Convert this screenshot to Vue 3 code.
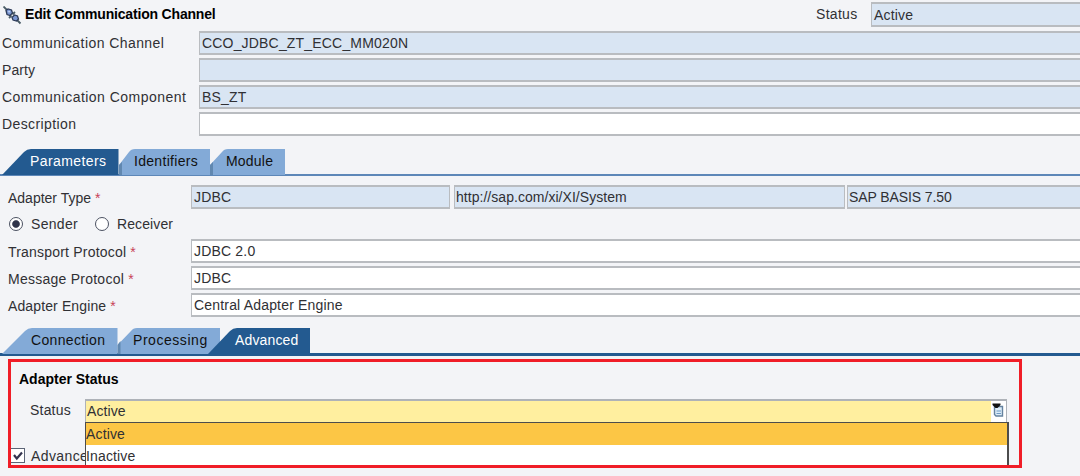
<template>
  <div class="screen">
    <div class="title-bar">
      <svg class="plug" width="19" height="19" viewBox="0 0 19 19">
        <path d="M0.500 0.500L4 4M14 14L17.500 17.500M12 6L9.500 8.500M8.500 9.500L6 12" stroke="#4a5c66" stroke-width="1.800" />
        <path d="M3 4.500L5 3L8.500 4L9.500 7L7 9.500L4 8.500Z" fill="#7c98d4" stroke="#2c3a58" stroke-width="1.300" />
        <path d="M9 11.500L11.500 9L14.500 10L15.500 13L13.500 15L10 14Z" fill="#7c98d4" stroke="#2c3a58" stroke-width="1.300" />
        <path d="M5 5H7.500L6 7Z" fill="#c1d2f4" />
      </svg>
      <h1>Edit Communication Channel</h1>
      <span class="status-label">Status</span>
      <div class="field top-status">Active</div>
    </div>

    <div class="header-form">
      <div v-for="row in header" :key="row.label" class="row">
        <label :class="row.cls">{{ row.label }}</label>
        <div class="field" :class="{ white: row.editable }">{{ row.value }}</div>
      </div>
    </div>

    <div class="tabs upper">
      <svg class="tab-shapes" width="320" height="26" viewBox="0 0 320 26">
        <path d="M119 26V16L129 3Q131 0 135 0H210V26Z" fill="#83aad7" />
        <path d="M210 26V16L222 3Q224 0 228 0H285V26Z" fill="#83aad7" />
        <path d="M119 16L122 13V26H119ZM210 16L213 13V26H210Z" fill="#6188b0" />
        <path d="M2 26L24 3Q27 0 31 0H118.500V26Z" fill="#235a90" />
      </svg>
      <span class="tab selected t-param">Parameters</span>
      <span class="tab t-ident">Identifiers</span>
      <span class="tab t-module">Module</span>
    </div>

    <div class="adapter">
      <div class="row">
        <label class="l-type">Adapter Type <b>*</b></label>
        <div class="field type">JDBC</div>
        <div class="field namespace">http://sap.com/xi/XI/System</div>
        <div class="field version">SAP BASIS 7.50</div>
      </div>
      <div class="radios">
        <i class="radio on"></i><span class="sender">Sender</span>
        <i class="radio"></i><span class="receiver">Receiver</span>
      </div>
      <div v-for="row in protocols" :key="row.label" class="row">
        <label :class="row.cls">{{ row.label }} <b>*</b></label>
        <div class="field white">{{ row.value }}</div>
      </div>
    </div>

    <div class="tabs lower">
      <svg class="tab-shapes" width="320" height="26" viewBox="0 0 320 26">
        <path d="M2 26L25 3Q28 0 32 0H117.500V26Z" fill="#83aad7" />
        <path d="M118.500 26V16L131 3Q133 0 137 0H220V26Z" fill="#83aad7" />
        <path d="M117.500 17L120.500 13V26H117.500Z" fill="#6188b0" />
        <path d="M208 26L230 3Q233 0 237 0H310V26Z" fill="#235a90" />
      </svg>
      <span class="tab t-conn">Connection</span>
      <span class="tab t-proc">Processing</span>
      <span class="tab selected t-adv">Advanced</span>
    </div>

    <div class="highlight">
      <h2>Adapter Status</h2>
      <div class="status-row">
        <span class="s-label">Status</span>
        <div class="combo">
          <span class="combo-value">{{ status }}</span>
          <span class="combo-btn">
            <svg width="12" height="14" viewBox="0 0 12 14">
              <path d="M2.500 3.500H10.500V13H4L2.500 11.500Z" fill="#dcecf8" stroke="#65829f" stroke-width="1.400" />
              <path d="M4.500 8H9M4.500 10.500H9" stroke="#6f9ac4" />
              <path d="M0.500 0.500H8.500V2L5.500 5H3.500L0.500 2Z" fill="#111" />
            </svg>
          </span>
        </div>
      </div>
      <div class="check-row">
        <span class="checkbox">
          <svg width="12" height="12" viewBox="0 0 12 12">
            <path d="M2 5L4.800 8.500L10 2.500" fill="none" stroke="#34344f" stroke-width="2.200" />
          </svg>
        </span>
        <span class="adv-label">Advance</span>
      </div>
      <div class="popup">
        <div v-for="o in options" :key="o" class="option" :class="{ active: o === status }">{{ o }}</div>
      </div>
    </div>
  </div>
</template>

<script setup>
import { ref } from 'vue';

const status = ref('Active');
const options = ['Active', 'Inactive'];

const header = [
  { label: 'Communication Channel', value: 'CCO_JDBC_ZT_ECC_MM020N', cls: 'l-channel' },
  { label: 'Party', value: '' , cls: 'l-party' },
  { label: 'Communication Component', value: 'BS_ZT', cls: 'l-component' },
  { label: 'Description', value: '', editable: true }
];

const protocols = [
  { label: 'Transport Protocol', value: 'JDBC 2.0' },
  { label: 'Message Protocol', value: 'JDBC', cls: 'l-message' },
  { label: 'Adapter Engine', value: 'Central Adapter Engine', cls: 'l-engine' }
];
</script>

<style>
body {
  overflow: hidden;
}
</style>

<style scoped>
.screen {
  width: 1080px;
  height: 476px;
  overflow: hidden;
  background: #f3f4f7;
  font-family: "Liberation Sans", Arial, sans-serif;
  font-size: 14px;
  line-height: 16px;
  letter-spacing: 0.4px;
  color: #303034;
  white-space: nowrap;
}

.screen * {
  box-sizing: border-box;
}

/* title */
.title-bar {
  display: flex;
  height: 31px;
  padding-top: 2px;
}

.plug {
  margin: 4px 0 0 3px;
}

h1 {
  width: 791px;
  margin: 4px 0 0 3px;
  font-size: 14px;
  line-height: 16px;
  letter-spacing: -0.18px;
  color: #000;
}

.status-label {
  flex: none;
  width: 55px;
  margin-top: 4px;
  letter-spacing: 0.3px;
}

.title-bar .field {
  height: 25px;
}

.field.top-status {
  padding-top: 3px;
}

/* rows */
.row {
  display: flex;
  height: 24px;
  margin-bottom: 3px;
}

.header-form label {
  width: 199px;
  flex: none;
  padding: 4px 0 0 2px;
}

.header-form .l-channel {
  letter-spacing: 0.43px;
}

.header-form .l-party {
  letter-spacing: 0.1px;
}

.header-form .l-component {
  letter-spacing: 0.47px;
}

.field {
  flex: 1;
  height: 24px;
  padding: 2px 0 0 2px;
  background: #d9e5f3;
  border: 2px solid #b9bcc0;
  border-left-width: 1px;
  border-right: 0;
  letter-spacing: 0.18px;
}

.field.white {
  background: #fff;
}

/* tabs */
.tabs {
  position: relative;
  display: flex;
  padding-top: 4px;
}

.tab-shapes {
  position: absolute;
  left: 0;
  top: 0;
}

.tab {
  position: relative;
  color: #111;
}

.selected {
  color: #fff;
}

.upper {
  height: 27px;
  margin-top: 13px;
  border-bottom: 2px solid #5d87b8;
}

.lower {
  height: 28px;
  margin-top: 11px;
  border-bottom: 3px solid #235a90;
}

.t-param {
  width: 104px;
  margin-left: 30px;
}

.t-ident {
  width: 92px;
  letter-spacing: 0.3px;
}

.t-module {
  letter-spacing: 0.2px;
}

.t-conn {
  width: 102px;
  margin-left: 31px;
  letter-spacing: 0.35px;
}

.t-proc {
  width: 102px;
  letter-spacing: 0.55px;
}

.t-adv {
  letter-spacing: 0.15px;
}

/* adapter settings */
.adapter {
  padding-top: 9px;
}

.adapter label {
  width: 191px;
  flex: none;
  padding: 5px 0 0 8px;
  letter-spacing: 0.2px;
}

.adapter .l-type {
  letter-spacing: 0;
}

.adapter .l-message {
  letter-spacing: 0.25px;
}

.adapter .l-engine {
  letter-spacing: 0.12px;
}

.adapter b {
  color: #c84258;
  font-weight: normal;
}

.adapter .type,
.adapter .namespace {
  flex: none;
  border-right: 1px solid #b9bcc0;
}

.adapter .type {
  width: 259px;
  margin-right: 4px;
}

.adapter .namespace {
  width: 391px;
  margin-right: 2px;
  padding-left: 1px;
  letter-spacing: 0.04px;
}

.adapter .version {
  padding-left: 1px;
  letter-spacing: -0.1px;
}

.radios {
  display: flex;
  height: 27px;
  padding: 4px 0 0 9px;
}

.radio {
  width: 14px;
  height: 14px;
  margin-top: 1px;
  background: #fff;
  border: 1.5px solid #4c5262;
  border-radius: 50%;
}

.radio.on {
  background: radial-gradient(circle, #30344a 0 3.3px, #fff 4.3px);
}

.sender {
  width: 64px;
  margin-left: 8px;
  letter-spacing: 0.3px;
}

.receiver {
  margin-left: 8px;
  letter-spacing: 0.1px;
}

/* marked area */
.highlight {
  position: relative;
  width: 1014px;
  height: 109px;
  margin: 3px 0 0 8px;
  border: 3px solid #f01d27;
  overflow: hidden;
}

h2 {
  margin: 9px 0 0 8px;
  font-size: 14px;
  line-height: 16px;
  letter-spacing: 0;
  color: #000;
}

.status-row {
  display: flex;
  margin-top: 12px;
}

.s-label {
  width: 55px;
  margin: 3px 0 0 19px;
  letter-spacing: 0.2px;
}

.combo {
  display: flex;
  width: 922px;
  height: 24px;
  background: #fff;
  border: 1px solid #aeb2b8;
  border-top-width: 2px;
}

.combo-value {
  width: 905px;
  padding: 2px 0 0 1px;
  background: #ffef9f;
  letter-spacing: 0.1px;
}

.combo-btn {
  padding: 2px 0 0 1px;
}

.check-row {
  display: flex;
  margin-top: 25px;
}

.checkbox {
  width: 15px;
  height: 15px;
  padding: 0 1px;
  margin-left: -1px;
  background: #fff;
  border: 1.5px solid #5b6476;
}

.adv-label {
  margin-left: 6px;
}

.popup {
  position: absolute;
  left: 74px;
  top: 60px;
  width: 924px;
  height: 48px;
  background: #fff;
  border: solid #4c4c4c;
  border-width: 1px 2px 0 1px;
}

.option {
  height: 22px;
  padding-top: 3px;
  letter-spacing: 0.15px;
}

.option.active {
  background: #fcc645;
}
</style>
